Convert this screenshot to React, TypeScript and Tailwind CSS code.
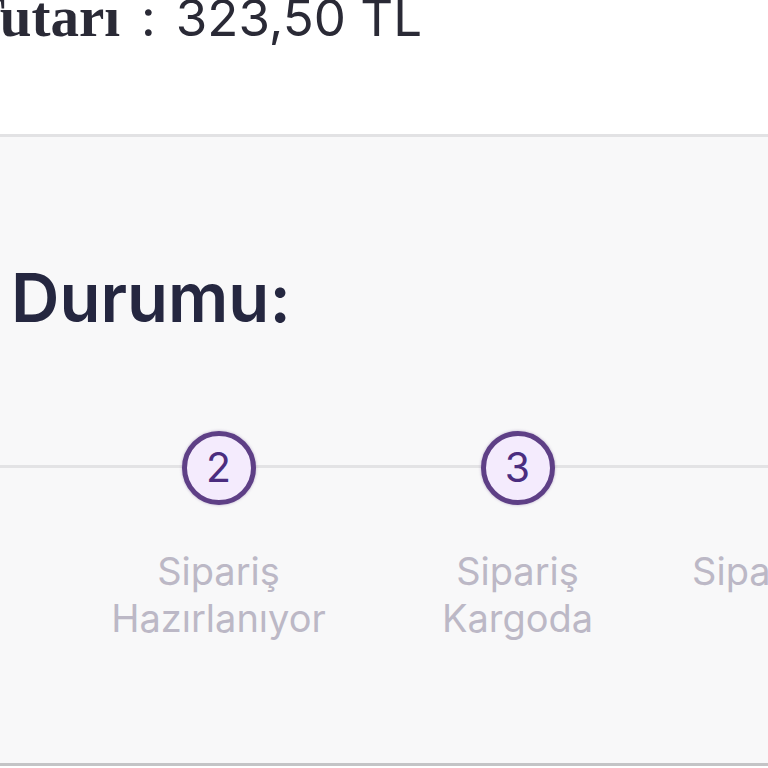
const steps = [
  { n: 1, lines: ["Sipariş", "Alındı"] },
  { n: 2, lines: ["Sipariş", "Hazırlanıyor"] },
  { n: 3, lines: ["Sipariş", "Kargoda"] },
  { n: 4, lines: ["Sipariş Teslim", "Edildi"] },
];

export default function App() {
  return (
    <div className="h-[768px] w-[768px] overflow-hidden bg-white font-['Inter',sans-serif]">
      <div className="flex h-[134px] flex-col bg-white">
        <div className="ml-[-33px] mt-[-13px] flex items-baseline whitespace-nowrap leading-[60px] text-[#2a2a36]">
          <span className="font-['Liberation_Serif',serif] text-[57px] font-bold">Tutarı</span>
          <span className="ml-[21px] text-[51px] font-normal">:</span>
          <span className="ml-[20px] text-[51px] font-normal">323,50 TL</span>
        </div>
      </div>

      <div className="flex h-[632px] flex-col border-y-[3px] border-t-[#e2e2e4] border-b-[#c4c4c6] bg-[#f8f8f9]">
        <h2 className="ml-[11px] mt-[121px] text-[67px] font-semibold leading-[80px] text-[#252740]">
          Durumu:
        </h2>

        <div className="relative mt-[93px] ml-[-230px] flex">
          <div className="absolute left-0 right-0 top-[34px] h-[3px] bg-[#e3e3e5]" />
          {steps.map((s) => (
            <div key={s.n} className="relative flex w-[299px] shrink-0 flex-col items-center">
              <div className="flex h-[74px] w-[74px] items-center justify-center rounded-full border-[5px] border-[#5e3f86] bg-[#f4ebfd] text-[41px] font-normal text-[#4b2d7f] shadow-[0_0_3px_rgba(94,63,134,0.4)]">
                {s.n}
              </div>
              <div className="mt-[43px] whitespace-nowrap text-center text-[38px] leading-[47px] text-[#bcb8c6]">
                {s.lines.map((l) => (
                  <div key={l}>{l}</div>
                ))}
              </div>
            </div>
          ))}
        </div>
      </div>
    </div>
  );
}
